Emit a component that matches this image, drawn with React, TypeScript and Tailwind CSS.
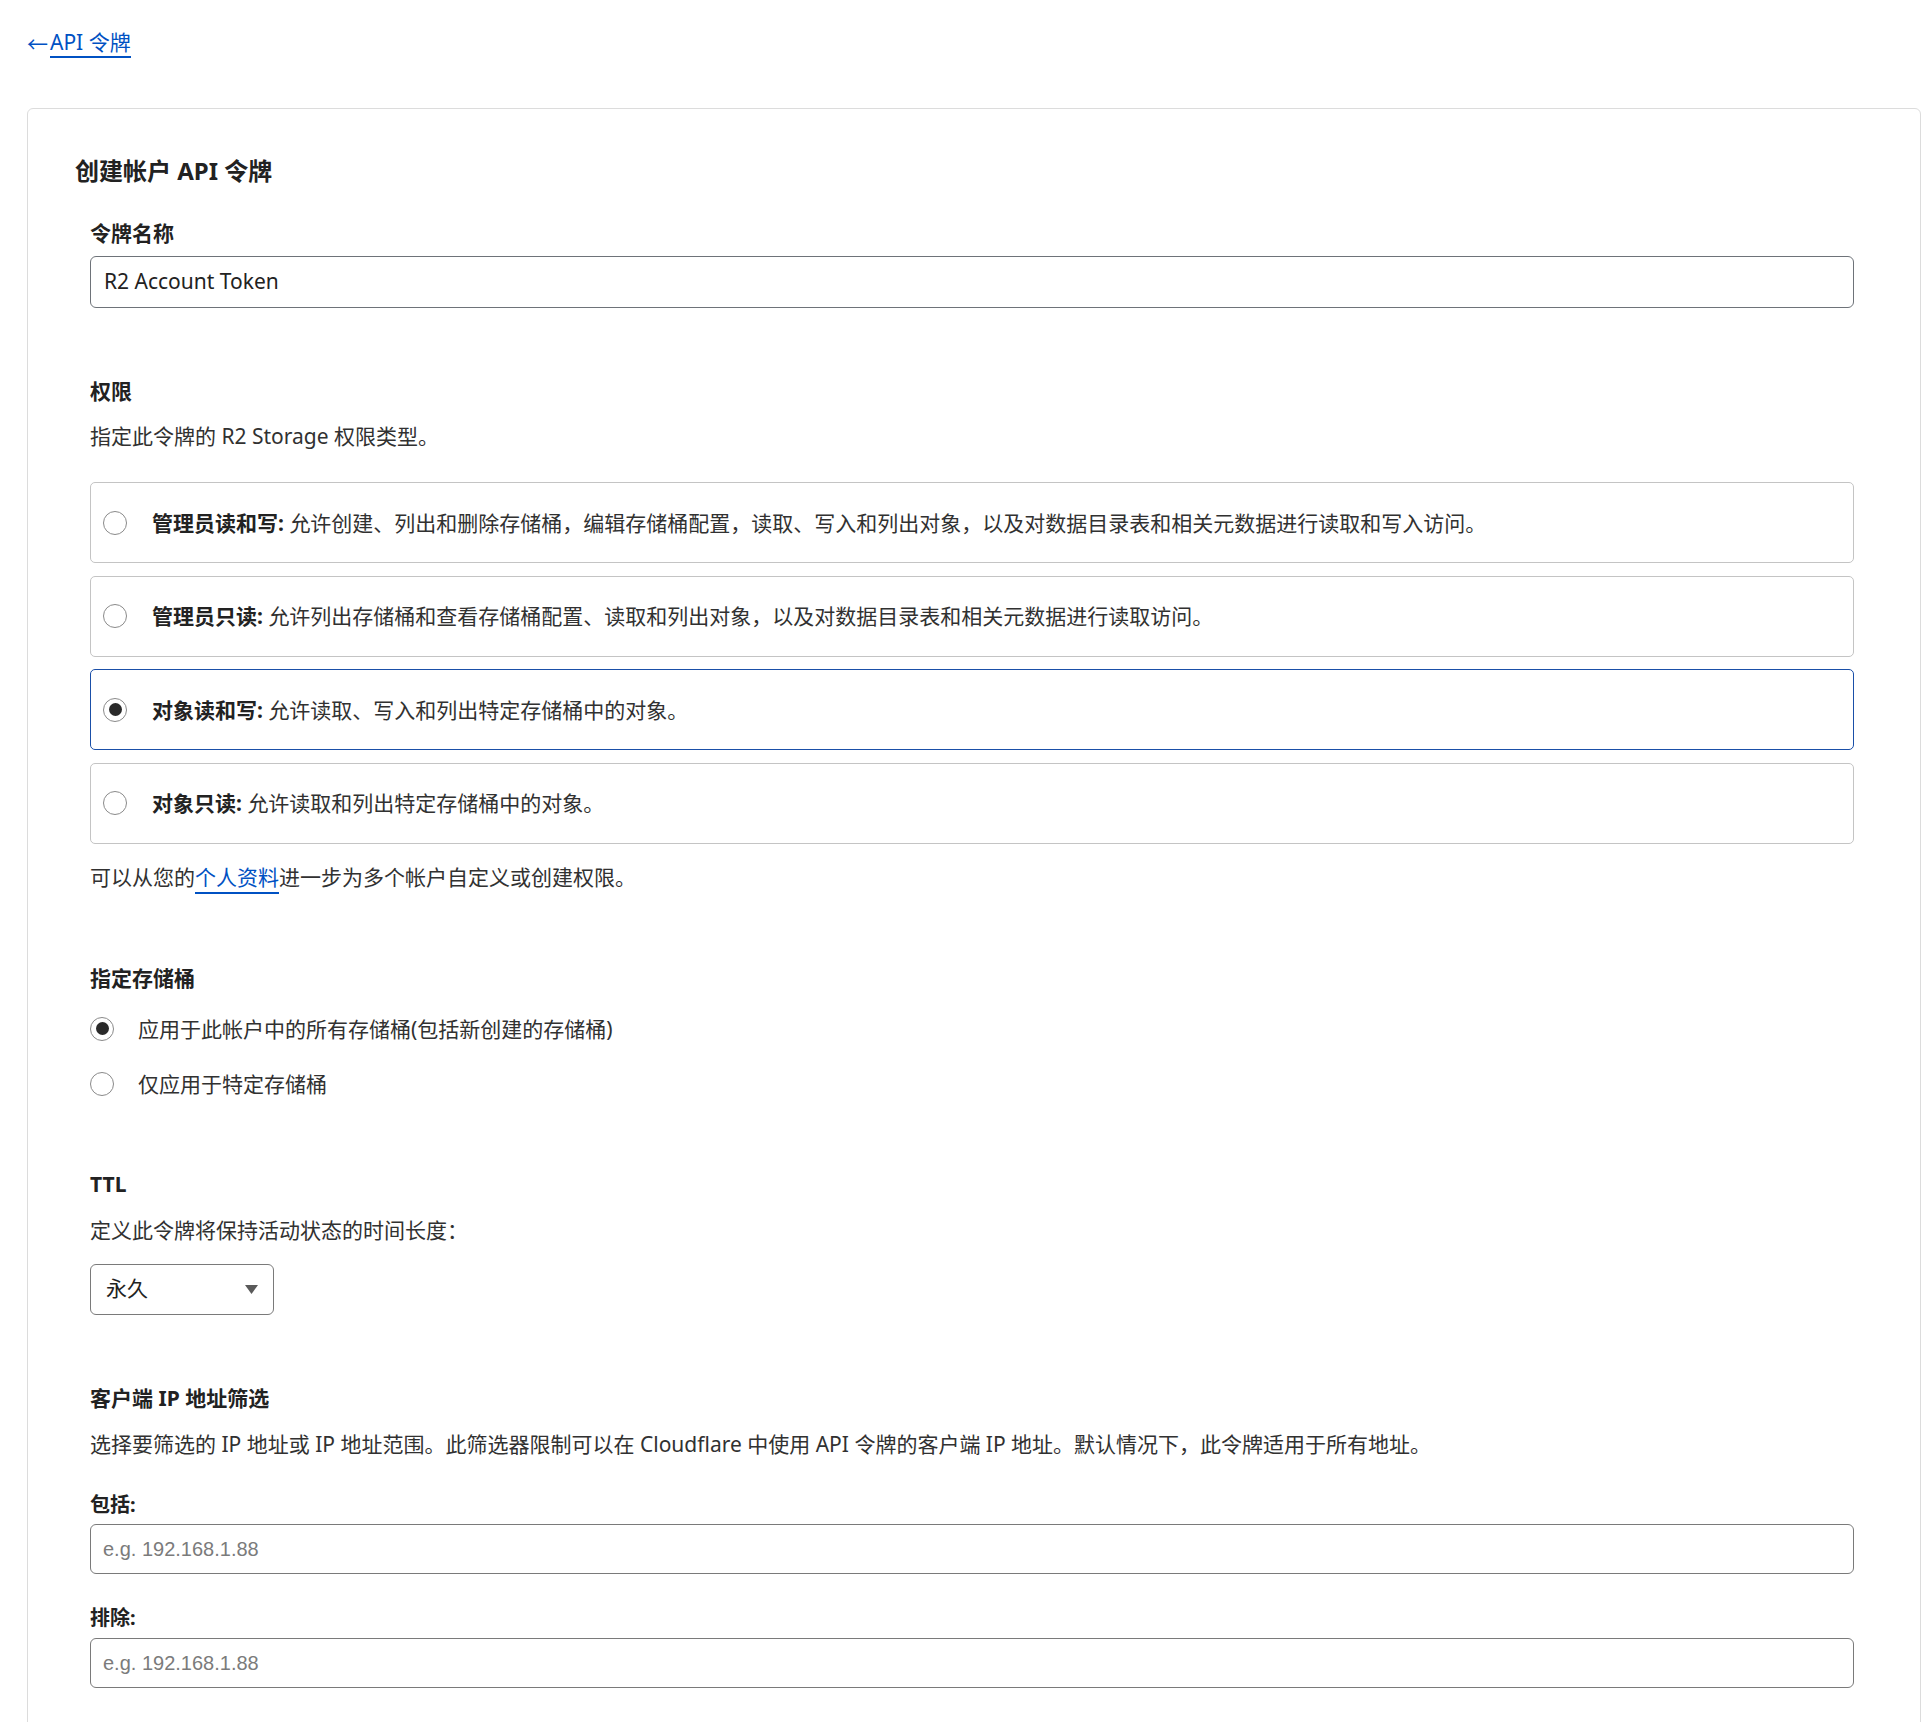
import React from "react";

const FONT = '"Segoe UI", "Noto Sans", "Noto Sans CJK SC", sans-serif';

function Radio({ checked }: { checked?: boolean }) {
  return (
    <span className="flex h-[24px] w-[24px] shrink-0 items-center justify-center rounded-full border border-[#8a8a8a] bg-white">
      {checked ? <span className="h-[13px] w-[13px] rounded-full bg-[#2a2a2a]" /> : null}
    </span>
  );
}

function OptionCard({ label, text, checked }: { label: string; text: string; checked?: boolean }) {
  return (
    <div
      className={
        checked
          ? "flex h-[81px] items-center rounded-[5px] border border-[#1a4fa8] bg-white pl-[12px]"
          : "flex h-[81px] items-center rounded-[5px] border border-[#c4c4c4] bg-white pl-[12px]"
      }
    >
      <Radio checked={checked} />
      <span className="ml-[25px] text-[21px] leading-[30px] text-[#313131]">
        <span className="font-bold text-[#222]">{label}:</span> {text}
      </span>
    </div>
  );
}

export default function App() {
  return (
    <div className="min-h-[1722px] bg-white text-[#313131]" style={{ fontFamily: FONT }}>
      <div className="h-[108px] pl-[27px] pt-[29px]">
        <a className="inline-flex items-center text-[21px] leading-[28px] text-[#0051c3]" href="#">
          <span className="mr-[2px]">←</span>
          <span className="border-b-2 border-[#0051c3] leading-[27px]">API 令牌</span>
        </a>
      </div>

      <div className="ml-[27px] mr-[5px] rounded-[6px] border border-[#dcdcdc] pb-[80px] pl-[47px] pr-[66px] pt-[46px]">
        <h1 className="text-[24px] font-bold leading-[32px] text-[#222]">创建帐户 API 令牌</h1>

        <div className="ml-[15px]">
          <div className="mt-[31px] text-[21px] font-bold leading-[30px] text-[#222]">令牌名称</div>
          <div className="mt-[8px] flex h-[52px] items-center rounded-[6px] border border-[#6e7379] px-[13px] text-[21px] text-[#222]">
            R2 Account Token
          </div>

          <div className="mt-[68px] text-[21px] font-bold leading-[30px] text-[#222]">权限</div>
          <div className="mt-[15px] text-[21px] leading-[30px]">指定此令牌的 R2 Storage 权限类型。</div>

          <div className="mt-[31px] flex flex-col gap-[12.5px]">
            <OptionCard
              label="管理员读和写"
              text="允许创建、列出和删除存储桶，编辑存储桶配置，读取、写入和列出对象，以及对数据目录表和相关元数据进行读取和写入访问。"
            />
            <OptionCard
              label="管理员只读"
              text="允许列出存储桶和查看存储桶配置、读取和列出对象，以及对数据目录表和相关元数据进行读取访问。"
            />
            <OptionCard label="对象读和写" text="允许读取、写入和列出特定存储桶中的对象。" checked />
            <OptionCard label="对象只读" text="允许读取和列出特定存储桶中的对象。" />
          </div>

          <div className="mt-[18px] text-[21px] leading-[30px]">
            可以从您的
            <a href="#" className="text-[#0051c3] underline decoration-2 underline-offset-[7px]">
              个人资料
            </a>
            进一步为多个帐户自定义或创建权限。
          </div>

          <div className="mt-[71px] text-[21px] font-bold leading-[30px] text-[#222]">指定存储桶</div>
          <div className="mt-[21px] flex items-center">
            <Radio checked />
            <span className="ml-[24px] text-[21px] leading-[30px]">应用于此帐户中的所有存储桶(包括新创建的存储桶)</span>
          </div>
          <div className="mt-[25px] flex items-center">
            <Radio />
            <span className="ml-[24px] text-[21px] leading-[30px]">仅应用于特定存储桶</span>
          </div>

          <div className="mt-[70px] text-[21px] font-bold leading-[30px] text-[#222]">TTL</div>
          <div className="mt-[16px] text-[21px] leading-[30px]">定义此令牌将保持活动状态的时间长度：</div>
          <div className="mt-[19px] flex h-[51px] w-[184px] items-center justify-between rounded-[6px] border border-[#7a7a7a] pl-[15px] pr-[15px]">
            <span className="text-[21px] text-[#222]">永久</span>
            <svg width="13" height="9" viewBox="0 0 13 9">
              <path d="M0 0 H13 L6.5 9 Z" fill="#5a5a5a" />
            </svg>
          </div>

          <div className="mt-[68px] text-[21px] font-bold leading-[30px] text-[#222]">客户端 IP 地址筛选</div>
          <div className="mt-[16px] text-[21px] leading-[30px]">
            选择要筛选的 IP 地址或 IP 地址范围。此筛选器限制可以在 Cloudflare 中使用 API 令牌的客户端 IP 地址。默认情况下，此令牌适用于所有地址。
          </div>

          <div className="mt-[31px] text-[20px] font-bold leading-[30px] text-[#222]">包括:</div>
          <div className="mt-[4px] flex h-[50px] items-center rounded-[6px] border border-[#7a7a7a] px-[12px]">
            <span className="text-[20px] text-[#7b7b7b]" style={{ fontFamily: '"Liberation Sans", Arial, sans-serif' }}>
              e.g. 192.168.1.88
            </span>
          </div>

          <div className="mt-[29px] text-[20px] font-bold leading-[30px] text-[#222]">排除:</div>
          <div className="mt-[5px] flex h-[50px] items-center rounded-[6px] border border-[#7a7a7a] px-[12px]">
            <span className="text-[20px] text-[#7b7b7b]" style={{ fontFamily: '"Liberation Sans", Arial, sans-serif' }}>
              e.g. 192.168.1.88
            </span>
          </div>
        </div>
      </div>
    </div>
  );
}
